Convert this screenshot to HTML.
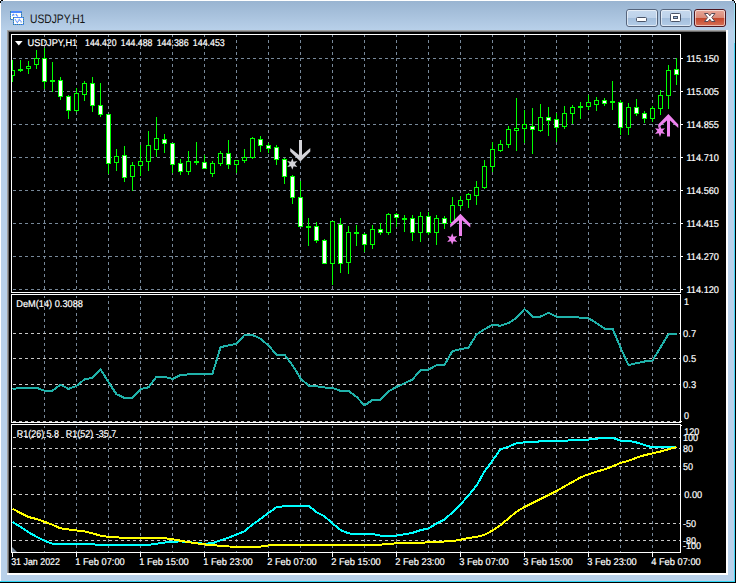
<!DOCTYPE html>
<html><head><meta charset="utf-8"><title>USDJPY,H1</title>
<style>html,body{margin:0;padding:0;background:#fff;overflow:hidden}svg{display:block}text{font-family:"Liberation Sans",sans-serif;text-rendering:geometricPrecision}.t9{font-size:9.8px;fill:#fff;stroke:#fff;stroke-width:0.2px}</style></head><body>
<svg width="738" height="583" viewBox="0 0 738 583">
<defs><linearGradient id="tb" x1="0" y1="0" x2="0" y2="1"><stop offset="0" stop-color="#99b4d1"/><stop offset="1" stop-color="#b9d1ea"/></linearGradient><linearGradient id="btn" x1="0" y1="0" x2="0" y2="1"><stop offset="0" stop-color="#c6d9ee"/><stop offset="0.5" stop-color="#bdd2ea"/><stop offset="0.5" stop-color="#a3bedc"/><stop offset="1" stop-color="#b4cde8"/></linearGradient><linearGradient id="cls" x1="0" y1="0" x2="0" y2="1"><stop offset="0" stop-color="#e9a99b"/><stop offset="0.48" stop-color="#d98a78"/><stop offset="0.5" stop-color="#c3452a"/><stop offset="1" stop-color="#d8745a"/></linearGradient><clipPath id="cm"><rect x="12" y="35" width="668" height="257"/></clipPath><clipPath id="c2"><rect x="12" y="295" width="668" height="127"/></clipPath><clipPath id="c3"><rect x="12" y="425" width="668" height="127"/></clipPath></defs>
<rect width="738" height="583" fill="#fff"/>
<g shape-rendering="crispEdges">
<rect x="1" y="1" width="734" height="581" fill="#b9d1ea"/>
<rect x="735" y="3" width="1" height="580" fill="#000"/>
<rect x="0" y="582" width="736" height="1" fill="#000"/>
<rect x="734" y="3" width="1" height="579" fill="#45d5f5"/>
<rect x="734" y="3" width="1" height="40" fill="#9fe3f8"/>
<rect x="0" y="581" width="735" height="1" fill="#2ed6f4"/>
<rect x="1" y="1" width="733" height="30" fill="url(#tb)"/>
<rect x="1" y="0" width="2" height="1" fill="#000"/><rect x="0" y="1" width="1" height="2" fill="#000"/>
<rect x="732" y="0" width="2" height="1" fill="#000"/><rect x="734" y="1" width="1" height="2" fill="#000"/>
<rect x="7" y="30" width="721" height="545" fill="#fff"/>
<rect x="7" y="30" width="719" height="543" fill="#a0a0a0"/>
<rect x="8" y="31" width="718" height="542" fill="#696969"/>
<rect x="9" y="32" width="717" height="541" fill="#000"/>
</g>
<g shape-rendering="crispEdges">
<rect x="10.5" y="11.5" width="11" height="8" fill="#fffefa" stroke="#3f8a8a"/>
<rect x="10.5" y="11.5" width="11" height="8" fill="none" stroke="#4a86ff" stroke-dasharray="1 1"/>
<rect x="11" y="11" width="10" height="2" fill="#4a86ff"/>
<rect x="13.5" y="17.5" width="10" height="7" fill="#fffefa" stroke="#3f8a8a"/>
<rect x="13.5" y="17.5" width="10" height="7" fill="none" stroke="#4a86ff" stroke-dasharray="1 1"/>
<rect x="14" y="17" width="9" height="1" fill="#4a86ff"/>
</g>
<polyline points="12.3,15.6 13.3,14.3 14.3,15.4" fill="none" stroke="#4a86ff" stroke-width="1.1"/>
<polyline points="15.8,14.2 17,15.6 18,16.4" fill="none" stroke="#4a86ff" stroke-width="1.1"/>
<polyline points="15,19.4 17.3,22.6 19.3,19.4 21.6,22.6" fill="none" stroke="#4a86ff" stroke-width="1.1" stroke-dasharray="1.2 0.5"/>
<text x="30" y="22.7" font-size="12.3" fill="#151515" textLength="55.3" lengthAdjust="spacingAndGlyphs">USDJPY,H1</text>
<rect x="626.5" y="9.5" width="31" height="17" rx="2.5" ry="2.5" fill="url(#btn)" stroke="#56657d"/>
<rect x="627.5" y="10.5" width="29" height="15" rx="1.5" ry="1.5" fill="none" stroke="#fff" stroke-opacity="0.55"/>
<rect x="660.5" y="9.5" width="31" height="17" rx="2.5" ry="2.5" fill="url(#btn)" stroke="#56657d"/>
<rect x="661.5" y="10.5" width="29" height="15" rx="1.5" ry="1.5" fill="none" stroke="#fff" stroke-opacity="0.55"/>
<rect x="694.5" y="9.5" width="31" height="17" rx="2.5" ry="2.5" fill="url(#cls)" stroke="#4d1620"/>
<rect x="695.5" y="10.5" width="29" height="15" rx="1.5" ry="1.5" fill="none" stroke="#fff" stroke-opacity="0.55"/>
<rect x="636.5" y="17.5" width="10" height="4" rx="1" fill="#fff" stroke="#4a5468"/>
<rect x="670.5" y="13.5" width="10" height="8" rx="1" fill="#fff" stroke="#4a5468"/>
<rect x="673.5" y="16.5" width="4" height="2" fill="#9fbbdc" stroke="#4a5468"/>
<path d="M704.5 13.5 L708 13.5 L709.8 15.8 L711.5 13.5 L715 13.5 L711.8 17.5 L715 21.5 L711.5 21.5 L709.8 19.2 L708 21.5 L704.5 21.5 L707.7 17.5 Z" fill="#fff" stroke="#5a4a55" stroke-width="1" stroke-linejoin="round"/>
<g shape-rendering="crispEdges" fill="none">
<path d="M44.5 35V292M76.5 35V292M108.5 35V292M140.5 35V292M172.5 35V292M204.5 35V292M236.5 35V292M268.5 35V292M300.5 35V292M332.5 35V292M364.5 35V292M396.5 35V292M428.5 35V292M460.5 35V292M492.5 35V292M524.5 35V292M556.5 35V292M588.5 35V292M620.5 35V292M652.5 35V292" stroke="#778899" stroke-dasharray="3 3" stroke-dashoffset="1"/>
<path d="M13 58.5H679M13 91.5H679M13 124.5H679M13 157.5H679M13 190.5H679M13 223.5H679M13 256.5H679M13 289.5H679" stroke="#778899" stroke-dasharray="3 3"/>
<path d="M44.5 296V422M76.5 296V422M108.5 296V422M140.5 296V422M172.5 296V422M204.5 296V422M236.5 296V422M268.5 296V422M300.5 296V422M332.5 296V422M364.5 296V422M396.5 296V422M428.5 296V422M460.5 296V422M492.5 296V422M524.5 296V422M556.5 296V422M588.5 296V422M620.5 296V422M652.5 296V422" stroke="#778899" stroke-dasharray="3 3" stroke-dashoffset="1"/>
<path d="M13 333.5H680M13 358.5H680M13 384.5H680M13 421.5H680" stroke="#c8c8c8" stroke-dasharray="3 3"/>
<path d="M44.5 426V552M76.5 426V552M108.5 426V552M140.5 426V552M172.5 426V552M204.5 426V552M236.5 426V552M268.5 426V552M300.5 426V552M332.5 426V552M364.5 426V552M396.5 426V552M428.5 426V552M460.5 426V552M492.5 426V552M524.5 426V552M556.5 426V552M588.5 426V552M620.5 426V552M652.5 426V552" stroke="#778899" stroke-dasharray="3 3" stroke-dashoffset="1"/>
<path d="M13 437.5H680M13 448.5H680M13 466.5H680M13 494.5H680M13 523.5H680M13 540.5H680" stroke="#c8c8c8" stroke-dasharray="3 3"/>
</g>
<g shape-rendering="crispEdges" clip-path="url(#cm)">
<rect x="12" y="60" width="1" height="22" fill="#00ff00"/>
<rect x="10" y="70" width="5" height="6" fill="#00ff00"/>
<rect x="11" y="71" width="3" height="4" fill="#000"/>
<rect x="20" y="60" width="1" height="12" fill="#00ff00"/>
<rect x="18" y="69" width="5" height="2" fill="#00ff00"/>
<rect x="28" y="61" width="1" height="13" fill="#00ff00"/>
<rect x="26" y="66" width="5" height="3" fill="#00ff00"/>
<rect x="27" y="67" width="3" height="1" fill="#000"/>
<rect x="36" y="50" width="1" height="19" fill="#00ff00"/>
<rect x="34" y="58" width="5" height="7" fill="#00ff00"/>
<rect x="35" y="59" width="3" height="5" fill="#000"/>
<rect x="44" y="48" width="1" height="41" fill="#00ff00"/>
<rect x="42" y="58" width="5" height="24" fill="#00ff00"/>
<rect x="43" y="59" width="3" height="22" fill="#fff"/>
<rect x="52" y="62" width="1" height="30" fill="#00ff00"/>
<rect x="50" y="80" width="5" height="2" fill="#00ff00"/>
<rect x="60" y="77" width="1" height="23" fill="#00ff00"/>
<rect x="58" y="80" width="5" height="17" fill="#00ff00"/>
<rect x="59" y="81" width="3" height="15" fill="#fff"/>
<rect x="68" y="95" width="1" height="24" fill="#00ff00"/>
<rect x="66" y="96" width="5" height="15" fill="#00ff00"/>
<rect x="67" y="97" width="3" height="13" fill="#fff"/>
<rect x="76" y="88" width="1" height="24" fill="#00ff00"/>
<rect x="74" y="93" width="5" height="18" fill="#00ff00"/>
<rect x="75" y="94" width="3" height="16" fill="#000"/>
<rect x="84" y="81" width="1" height="20" fill="#00ff00"/>
<rect x="82" y="83" width="5" height="12" fill="#00ff00"/>
<rect x="83" y="84" width="3" height="10" fill="#000"/>
<rect x="92" y="77" width="1" height="35" fill="#00ff00"/>
<rect x="90" y="83" width="5" height="23" fill="#00ff00"/>
<rect x="91" y="84" width="3" height="21" fill="#fff"/>
<rect x="100" y="83" width="1" height="34" fill="#00ff00"/>
<rect x="98" y="105" width="5" height="10" fill="#00ff00"/>
<rect x="99" y="106" width="3" height="8" fill="#fff"/>
<rect x="108" y="114" width="1" height="60" fill="#00ff00"/>
<rect x="106" y="114" width="5" height="50" fill="#00ff00"/>
<rect x="107" y="115" width="3" height="48" fill="#fff"/>
<rect x="116" y="149" width="1" height="22" fill="#00ff00"/>
<rect x="114" y="156" width="5" height="7" fill="#00ff00"/>
<rect x="115" y="157" width="3" height="5" fill="#000"/>
<rect x="124" y="146" width="1" height="36" fill="#00ff00"/>
<rect x="122" y="155" width="5" height="23" fill="#00ff00"/>
<rect x="123" y="156" width="3" height="21" fill="#fff"/>
<rect x="132" y="162" width="1" height="29" fill="#00ff00"/>
<rect x="130" y="165" width="5" height="12" fill="#00ff00"/>
<rect x="131" y="166" width="3" height="10" fill="#000"/>
<rect x="140" y="145" width="1" height="31" fill="#00ff00"/>
<rect x="138" y="161" width="5" height="5" fill="#00ff00"/>
<rect x="139" y="162" width="3" height="3" fill="#000"/>
<rect x="148" y="131" width="1" height="40" fill="#00ff00"/>
<rect x="146" y="145" width="5" height="17" fill="#00ff00"/>
<rect x="147" y="146" width="3" height="15" fill="#000"/>
<rect x="156" y="117" width="1" height="40" fill="#00ff00"/>
<rect x="154" y="138" width="5" height="12" fill="#00ff00"/>
<rect x="155" y="139" width="3" height="10" fill="#000"/>
<rect x="164" y="134" width="1" height="19" fill="#00ff00"/>
<rect x="162" y="139" width="5" height="5" fill="#00ff00"/>
<rect x="163" y="140" width="3" height="3" fill="#fff"/>
<rect x="172" y="143" width="1" height="30" fill="#00ff00"/>
<rect x="170" y="143" width="5" height="22" fill="#00ff00"/>
<rect x="171" y="144" width="3" height="20" fill="#fff"/>
<rect x="180" y="159" width="1" height="16" fill="#00ff00"/>
<rect x="178" y="163" width="5" height="9" fill="#00ff00"/>
<rect x="179" y="164" width="3" height="7" fill="#fff"/>
<rect x="188" y="151" width="1" height="24" fill="#00ff00"/>
<rect x="186" y="161" width="5" height="11" fill="#00ff00"/>
<rect x="187" y="162" width="3" height="9" fill="#000"/>
<rect x="196" y="142" width="1" height="23" fill="#00ff00"/>
<rect x="194" y="161" width="5" height="2" fill="#00ff00"/>
<rect x="204" y="155" width="1" height="14" fill="#00ff00"/>
<rect x="202" y="162" width="5" height="7" fill="#00ff00"/>
<rect x="203" y="163" width="3" height="5" fill="#fff"/>
<rect x="212" y="161" width="1" height="16" fill="#00ff00"/>
<rect x="210" y="163" width="5" height="11" fill="#00ff00"/>
<rect x="211" y="164" width="3" height="9" fill="#000"/>
<rect x="220" y="151" width="1" height="15" fill="#00ff00"/>
<rect x="218" y="153" width="5" height="11" fill="#00ff00"/>
<rect x="219" y="154" width="3" height="9" fill="#000"/>
<rect x="228" y="140" width="1" height="29" fill="#00ff00"/>
<rect x="226" y="153" width="5" height="12" fill="#00ff00"/>
<rect x="227" y="154" width="3" height="10" fill="#fff"/>
<rect x="236" y="160" width="1" height="13" fill="#00ff00"/>
<rect x="234" y="160" width="5" height="5" fill="#00ff00"/>
<rect x="235" y="161" width="3" height="3" fill="#000"/>
<rect x="244" y="149" width="1" height="14" fill="#00ff00"/>
<rect x="242" y="157" width="5" height="4" fill="#00ff00"/>
<rect x="243" y="158" width="3" height="2" fill="#000"/>
<rect x="252" y="137" width="1" height="22" fill="#00ff00"/>
<rect x="250" y="138" width="5" height="20" fill="#00ff00"/>
<rect x="251" y="139" width="3" height="18" fill="#000"/>
<rect x="260" y="136" width="1" height="16" fill="#00ff00"/>
<rect x="258" y="139" width="5" height="7" fill="#00ff00"/>
<rect x="259" y="140" width="3" height="5" fill="#fff"/>
<rect x="268" y="143" width="1" height="10" fill="#00ff00"/>
<rect x="266" y="145" width="5" height="4" fill="#00ff00"/>
<rect x="267" y="146" width="3" height="2" fill="#fff"/>
<rect x="276" y="145" width="1" height="20" fill="#00ff00"/>
<rect x="274" y="147" width="5" height="13" fill="#00ff00"/>
<rect x="275" y="148" width="3" height="11" fill="#fff"/>
<rect x="284" y="158" width="1" height="26" fill="#00ff00"/>
<rect x="282" y="159" width="5" height="18" fill="#00ff00"/>
<rect x="283" y="160" width="3" height="16" fill="#fff"/>
<rect x="292" y="175" width="1" height="29" fill="#00ff00"/>
<rect x="290" y="176" width="5" height="22" fill="#00ff00"/>
<rect x="291" y="177" width="3" height="20" fill="#fff"/>
<rect x="300" y="181" width="1" height="46" fill="#00ff00"/>
<rect x="298" y="197" width="5" height="30" fill="#00ff00"/>
<rect x="299" y="198" width="3" height="28" fill="#fff"/>
<rect x="308" y="218" width="1" height="28" fill="#00ff00"/>
<rect x="306" y="226" width="5" height="2" fill="#00ff00"/>
<rect x="316" y="222" width="1" height="21" fill="#00ff00"/>
<rect x="314" y="226" width="5" height="15" fill="#00ff00"/>
<rect x="315" y="227" width="3" height="13" fill="#fff"/>
<rect x="324" y="239" width="1" height="25" fill="#00ff00"/>
<rect x="322" y="240" width="5" height="24" fill="#00ff00"/>
<rect x="323" y="241" width="3" height="22" fill="#fff"/>
<rect x="332" y="221" width="1" height="64" fill="#00ff00"/>
<rect x="330" y="221" width="5" height="43" fill="#00ff00"/>
<rect x="331" y="222" width="3" height="41" fill="#000"/>
<rect x="340" y="218" width="1" height="55" fill="#00ff00"/>
<rect x="338" y="224" width="5" height="40" fill="#00ff00"/>
<rect x="339" y="225" width="3" height="38" fill="#fff"/>
<rect x="348" y="226" width="1" height="48" fill="#00ff00"/>
<rect x="346" y="232" width="5" height="31" fill="#00ff00"/>
<rect x="347" y="233" width="3" height="29" fill="#000"/>
<rect x="356" y="225" width="1" height="21" fill="#00ff00"/>
<rect x="354" y="232" width="5" height="2" fill="#00ff00"/>
<rect x="364" y="233" width="1" height="19" fill="#00ff00"/>
<rect x="362" y="234" width="5" height="11" fill="#00ff00"/>
<rect x="363" y="235" width="3" height="9" fill="#fff"/>
<rect x="372" y="225" width="1" height="24" fill="#00ff00"/>
<rect x="370" y="229" width="5" height="16" fill="#00ff00"/>
<rect x="371" y="230" width="3" height="14" fill="#000"/>
<rect x="380" y="223" width="1" height="12" fill="#00ff00"/>
<rect x="378" y="229" width="5" height="4" fill="#00ff00"/>
<rect x="379" y="230" width="3" height="2" fill="#fff"/>
<rect x="388" y="213" width="1" height="22" fill="#00ff00"/>
<rect x="386" y="214" width="5" height="19" fill="#00ff00"/>
<rect x="387" y="215" width="3" height="17" fill="#000"/>
<rect x="396" y="213" width="1" height="14" fill="#00ff00"/>
<rect x="394" y="214" width="5" height="4" fill="#00ff00"/>
<rect x="395" y="215" width="3" height="2" fill="#fff"/>
<rect x="404" y="215" width="1" height="17" fill="#00ff00"/>
<rect x="402" y="218" width="5" height="2" fill="#00ff00"/>
<rect x="412" y="215" width="1" height="26" fill="#00ff00"/>
<rect x="410" y="218" width="5" height="15" fill="#00ff00"/>
<rect x="411" y="219" width="3" height="13" fill="#fff"/>
<rect x="420" y="212" width="1" height="30" fill="#00ff00"/>
<rect x="418" y="216" width="5" height="17" fill="#00ff00"/>
<rect x="419" y="217" width="3" height="15" fill="#000"/>
<rect x="428" y="212" width="1" height="23" fill="#00ff00"/>
<rect x="426" y="216" width="5" height="17" fill="#00ff00"/>
<rect x="427" y="217" width="3" height="15" fill="#fff"/>
<rect x="436" y="215" width="1" height="30" fill="#00ff00"/>
<rect x="434" y="218" width="5" height="15" fill="#00ff00"/>
<rect x="435" y="219" width="3" height="13" fill="#000"/>
<rect x="444" y="216" width="1" height="13" fill="#00ff00"/>
<rect x="442" y="218" width="5" height="6" fill="#00ff00"/>
<rect x="443" y="219" width="3" height="4" fill="#fff"/>
<rect x="452" y="197" width="1" height="27" fill="#00ff00"/>
<rect x="450" y="205" width="5" height="18" fill="#00ff00"/>
<rect x="451" y="206" width="3" height="16" fill="#000"/>
<rect x="460" y="196" width="1" height="13" fill="#00ff00"/>
<rect x="458" y="200" width="5" height="6" fill="#00ff00"/>
<rect x="459" y="201" width="3" height="4" fill="#000"/>
<rect x="468" y="193" width="1" height="15" fill="#00ff00"/>
<rect x="466" y="194" width="5" height="6" fill="#00ff00"/>
<rect x="467" y="195" width="3" height="4" fill="#000"/>
<rect x="476" y="181" width="1" height="24" fill="#00ff00"/>
<rect x="474" y="187" width="5" height="9" fill="#00ff00"/>
<rect x="475" y="188" width="3" height="7" fill="#000"/>
<rect x="484" y="160" width="1" height="29" fill="#00ff00"/>
<rect x="482" y="166" width="5" height="22" fill="#00ff00"/>
<rect x="483" y="167" width="3" height="20" fill="#000"/>
<rect x="492" y="142" width="1" height="30" fill="#00ff00"/>
<rect x="490" y="149" width="5" height="18" fill="#00ff00"/>
<rect x="491" y="150" width="3" height="16" fill="#000"/>
<rect x="500" y="140" width="1" height="12" fill="#00ff00"/>
<rect x="498" y="144" width="5" height="7" fill="#00ff00"/>
<rect x="499" y="145" width="3" height="5" fill="#000"/>
<rect x="508" y="126" width="1" height="22" fill="#00ff00"/>
<rect x="506" y="129" width="5" height="16" fill="#00ff00"/>
<rect x="507" y="130" width="3" height="14" fill="#000"/>
<rect x="516" y="98" width="1" height="53" fill="#00ff00"/>
<rect x="514" y="128" width="5" height="3" fill="#00ff00"/>
<rect x="515" y="129" width="3" height="1" fill="#000"/>
<rect x="524" y="110" width="1" height="33" fill="#00ff00"/>
<rect x="522" y="124" width="5" height="5" fill="#00ff00"/>
<rect x="523" y="125" width="3" height="3" fill="#000"/>
<rect x="532" y="108" width="1" height="46" fill="#00ff00"/>
<rect x="530" y="126" width="5" height="4" fill="#00ff00"/>
<rect x="531" y="127" width="3" height="2" fill="#fff"/>
<rect x="540" y="104" width="1" height="28" fill="#00ff00"/>
<rect x="538" y="117" width="5" height="14" fill="#00ff00"/>
<rect x="539" y="118" width="3" height="12" fill="#000"/>
<rect x="548" y="107" width="1" height="29" fill="#00ff00"/>
<rect x="546" y="117" width="5" height="4" fill="#00ff00"/>
<rect x="547" y="118" width="3" height="2" fill="#fff"/>
<rect x="556" y="113" width="1" height="29" fill="#00ff00"/>
<rect x="554" y="119" width="5" height="9" fill="#00ff00"/>
<rect x="555" y="120" width="3" height="7" fill="#fff"/>
<rect x="564" y="106" width="1" height="23" fill="#00ff00"/>
<rect x="562" y="113" width="5" height="14" fill="#00ff00"/>
<rect x="563" y="114" width="3" height="12" fill="#000"/>
<rect x="572" y="105" width="1" height="19" fill="#00ff00"/>
<rect x="570" y="107" width="5" height="7" fill="#00ff00"/>
<rect x="571" y="108" width="3" height="5" fill="#000"/>
<rect x="580" y="102" width="1" height="17" fill="#00ff00"/>
<rect x="578" y="106" width="5" height="2" fill="#00ff00"/>
<rect x="588" y="95" width="1" height="15" fill="#00ff00"/>
<rect x="586" y="102" width="5" height="5" fill="#00ff00"/>
<rect x="587" y="103" width="3" height="3" fill="#000"/>
<rect x="596" y="97" width="1" height="14" fill="#00ff00"/>
<rect x="594" y="100" width="5" height="5" fill="#00ff00"/>
<rect x="595" y="101" width="3" height="3" fill="#000"/>
<rect x="604" y="98" width="1" height="8" fill="#00ff00"/>
<rect x="602" y="100" width="5" height="4" fill="#00ff00"/>
<rect x="603" y="101" width="3" height="2" fill="#fff"/>
<rect x="612" y="81" width="1" height="29" fill="#00ff00"/>
<rect x="610" y="101" width="5" height="2" fill="#00ff00"/>
<rect x="620" y="100" width="1" height="35" fill="#00ff00"/>
<rect x="618" y="102" width="5" height="26" fill="#00ff00"/>
<rect x="619" y="103" width="3" height="24" fill="#fff"/>
<rect x="628" y="103" width="1" height="32" fill="#00ff00"/>
<rect x="626" y="107" width="5" height="21" fill="#00ff00"/>
<rect x="627" y="108" width="3" height="19" fill="#000"/>
<rect x="636" y="99" width="1" height="17" fill="#00ff00"/>
<rect x="634" y="107" width="5" height="7" fill="#00ff00"/>
<rect x="635" y="108" width="3" height="5" fill="#fff"/>
<rect x="644" y="111" width="1" height="12" fill="#00ff00"/>
<rect x="642" y="113" width="5" height="6" fill="#00ff00"/>
<rect x="643" y="114" width="3" height="4" fill="#fff"/>
<rect x="652" y="106" width="1" height="16" fill="#00ff00"/>
<rect x="650" y="108" width="5" height="11" fill="#00ff00"/>
<rect x="651" y="109" width="3" height="9" fill="#000"/>
<rect x="660" y="90" width="1" height="25" fill="#00ff00"/>
<rect x="658" y="95" width="5" height="14" fill="#00ff00"/>
<rect x="659" y="96" width="3" height="12" fill="#000"/>
<rect x="668" y="65" width="1" height="44" fill="#00ff00"/>
<rect x="666" y="70" width="5" height="26" fill="#00ff00"/>
<rect x="667" y="71" width="3" height="24" fill="#000"/>
<rect x="676" y="58" width="1" height="27" fill="#00ff00"/>
<rect x="674" y="69" width="5" height="6" fill="#00ff00"/>
<rect x="675" y="70" width="3" height="4" fill="#fff"/>
</g>
<path d="M299 140 H302 V155 L310.3 148 L310.3 151.4 L300.4 161.6 L290.2 151.4 L290.2 148 L299 155 Z" fill="#d3d3d8"/>
<polygon points="292.30,158.20 293.61,161.74 297.32,161.10 294.91,164.00 297.32,166.90 293.61,166.26 292.30,169.80 291.00,166.26 287.28,166.90 289.69,164.00 287.28,161.10 291.00,161.74" fill="#d3d3d8"/>
<path d="M459 236 H462 V220.3 L470.3 227.60000000000002 L470.3 224.10000000000002 L460.4 213.70000000000002 L450.2 224.10000000000002 L450.2 227.60000000000002 L459 220.3 Z" fill="#ee82ee"/>
<polygon points="452.20,233.20 453.50,236.74 457.22,236.10 454.81,239.00 457.22,241.90 453.50,241.26 452.20,244.80 450.89,241.26 447.18,241.90 449.59,239.00 447.18,236.10 450.89,236.74" fill="#ee82ee"/>
<path d="M667 136.4 H670 V120.6 L678.3 127.89999999999999 L678.3 124.39999999999999 L668.4 114.0 L658.2 124.39999999999999 L658.2 127.89999999999999 L667 120.6 Z" fill="#ee82ee"/>
<polygon points="660.00,125.30 661.30,128.84 665.02,128.20 662.61,131.10 665.02,134.00 661.30,133.36 660.00,136.90 658.70,133.36 654.98,134.00 657.39,131.10 654.98,128.20 658.70,128.84" fill="#ee82ee"/>
<polyline points="12.5,389.1 20.5,387.7 28.5,387.7 36.5,387.7 44.5,390.7 52.5,390.7 60.5,384.7 68.5,388.9 76.5,385.9 84.5,379.4 92.5,377.8 100.5,369.3 108.5,382.2 116.5,394.2 124.5,397.9 132.5,397.9 140.5,389.1 148.5,387.3 156.5,376.7 164.5,376.7 172.5,379.0 180.5,374.9 188.5,374.4 196.5,373.7 204.5,373.7 212.5,373.7 220.5,347.2 228.5,345.4 236.5,343.8 244.5,335.0 252.5,335.0 260.5,338.7 268.5,345.6 276.5,354.6 284.5,354.6 292.5,365.2 300.5,378.3 308.5,385.7 316.5,386.2 324.5,387.5 332.5,388.0 340.5,390.8 348.5,390.8 356.5,396.8 364.5,405.3 372.5,400.0 380.5,399.7 388.5,391.2 396.5,387.1 404.5,383.2 412.5,379.5 420.5,370.0 428.5,369.6 436.5,365.2 444.5,364.7 452.5,351.1 460.5,349.1 468.5,347.7 476.5,334.6 484.5,329.3 492.5,324.6 500.5,325.8 508.5,323.1 516.5,317.7 524.5,309.0 532.5,316.6 540.5,316.6 548.5,312.8 556.5,316.6 564.5,316.6 572.5,316.6 580.5,317.7 588.5,318.2 596.5,323.1 604.5,328.5 612.5,328.5 620.5,347.6 628.5,365.1 636.5,363.2 644.5,361.5 652.5,360.5 660.5,347.5 668.5,333.9 676.5,333.9" fill="none" stroke="#20b2aa" stroke-width="2" stroke-linejoin="round" shape-rendering="crispEdges" clip-path="url(#c2)"/>
<polyline points="12.5,521.8 20.5,526.9 28.5,532.2 36.5,536.8 44.5,540.7 52.5,543.7 60.5,543.7 68.5,543.7 76.5,543.7 84.5,543.7 92.5,544.3 100.5,544.9 108.5,544.9 116.5,544.9 124.5,544.9 132.5,544.9 140.5,544.9 148.5,544.9 156.5,543.7 164.5,542.6 172.5,541.7 180.5,541.4 188.5,542.1 196.5,543.0 204.5,543.7 212.5,543.3 220.5,540.3 228.5,537.7 236.5,534.6 244.5,531.2 252.5,524.5 260.5,519.0 268.5,512.9 276.5,507.2 284.5,506.2 292.5,505.6 300.5,505.6 308.5,505.6 316.5,512.3 324.5,516.3 332.5,523.5 340.5,530.0 348.5,533.4 356.5,533.9 364.5,533.9 372.5,533.9 380.5,535.6 388.5,535.6 396.5,535.6 404.5,534.2 412.5,532.9 420.5,530.2 428.5,528.4 436.5,523.6 444.5,519.5 452.5,512.3 460.5,504.5 468.5,495.4 476.5,485.6 484.5,471.5 492.5,460.5 500.5,449.3 508.5,446.7 516.5,443.2 524.5,442.4 532.5,442.4 540.5,441.2 548.5,440.6 556.5,440.6 564.5,440.6 572.5,440.4 580.5,440.0 588.5,439.6 596.5,438.7 604.5,437.8 612.5,437.8 620.5,440.6 628.5,440.8 636.5,442.5 644.5,445.0 652.5,447.4 660.5,447.4 668.5,447.4 676.5,447.1" fill="none" stroke="#00ffff" stroke-width="2" stroke-linejoin="round" shape-rendering="crispEdges" clip-path="url(#c3)"/>
<polyline points="12.5,508.7 20.5,513.0 28.5,517.0 36.5,519.0 44.5,521.8 52.5,524.8 60.5,528.3 68.5,529.4 76.5,530.4 84.5,531.3 92.5,533.3 100.5,535.7 108.5,536.8 116.5,537.3 124.5,538.0 132.5,538.2 140.5,538.2 148.5,538.2 156.5,538.2 164.5,538.2 172.5,539.3 180.5,540.7 188.5,542.1 196.5,543.3 204.5,544.4 212.5,545.2 220.5,545.8 228.5,546.5 236.5,546.6 244.5,546.6 252.5,546.6 260.5,546.6 268.5,545.4 276.5,544.7 284.5,544.7 292.5,544.7 300.5,544.7 308.5,544.7 316.5,544.7 324.5,544.7 332.5,544.7 340.5,544.7 348.5,544.7 356.5,544.7 364.5,544.7 372.5,544.7 380.5,544.7 388.5,543.8 396.5,543.4 404.5,543.4 412.5,543.2 420.5,542.8 428.5,542.3 436.5,542.1 444.5,541.5 452.5,541.1 460.5,539.7 468.5,538.0 476.5,537.0 484.5,534.9 492.5,530.5 500.5,525.2 508.5,518.4 516.5,511.7 524.5,506.9 532.5,502.9 540.5,498.9 548.5,495.1 556.5,491.1 564.5,486.4 572.5,482.0 580.5,477.4 588.5,474.2 596.5,471.7 604.5,469.3 612.5,466.4 620.5,463.0 628.5,460.8 636.5,457.7 644.5,455.2 652.5,453.4 660.5,451.5 668.5,449.3 676.5,447.1" fill="none" stroke="#ffff00" stroke-width="2" stroke-linejoin="round" shape-rendering="crispEdges" clip-path="url(#c3)"/>
<g shape-rendering="crispEdges" fill="#fff">
<rect x="11" y="34" width="670" height="1"/>
<rect x="11" y="292" width="670" height="1"/>
<rect x="11" y="34" width="1" height="259"/>
<rect x="680" y="34" width="1" height="259"/>
<rect x="11" y="294" width="670" height="1"/>
<rect x="11" y="422" width="670" height="1"/>
<rect x="11" y="294" width="1" height="129"/>
<rect x="680" y="294" width="1" height="129"/>
<rect x="11" y="424" width="670" height="1"/>
<rect x="11" y="552" width="670" height="1"/>
<rect x="11" y="424" width="1" height="129"/>
<rect x="680" y="424" width="1" height="129"/>
<rect x="681" y="58" width="2" height="1"/>
<rect x="681" y="91" width="2" height="1"/>
<rect x="681" y="124" width="2" height="1"/>
<rect x="681" y="157" width="2" height="1"/>
<rect x="681" y="190" width="2" height="1"/>
<rect x="681" y="223" width="2" height="1"/>
<rect x="681" y="256" width="2" height="1"/>
<rect x="681" y="289" width="2" height="1"/>
<rect x="681" y="421" width="1" height="1"/><rect x="681" y="425" width="1" height="1"/>
<rect x="12" y="553" width="1" height="4"/>
<rect x="76" y="553" width="1" height="4"/>
<rect x="140" y="553" width="1" height="4"/>
<rect x="204" y="553" width="1" height="4"/>
<rect x="268" y="553" width="1" height="4"/>
<rect x="332" y="553" width="1" height="4"/>
<rect x="396" y="553" width="1" height="4"/>
<rect x="460" y="553" width="1" height="4"/>
<rect x="524" y="553" width="1" height="4"/>
<rect x="588" y="553" width="1" height="4"/>
<rect x="652" y="553" width="1" height="4"/>
</g>
<polygon points="12,547 12,552 17,552" fill="#778899"/>
<polygon points="15,41 22.6,41 18.8,45.4" fill="#fff"/>
<text class="t9" x="27.6" y="45.7" textLength="49.6" lengthAdjust="spacingAndGlyphs">USDJPY,H1</text>
<text class="t9" x="85.1" y="45.7" textLength="31.4" lengthAdjust="spacingAndGlyphs">144.420</text>
<text class="t9" x="120.8" y="45.7" textLength="31.6" lengthAdjust="spacingAndGlyphs">144.488</text>
<text class="t9" x="156.7" y="45.7" textLength="32" lengthAdjust="spacingAndGlyphs">144.386</text>
<text class="t9" x="192.8" y="45.7" textLength="32" lengthAdjust="spacingAndGlyphs">144.453</text>
<text class="t9" x="686.4" y="62" textLength="32.6" lengthAdjust="spacingAndGlyphs">115.150</text>
<text class="t9" x="686.4" y="95" textLength="32.6" lengthAdjust="spacingAndGlyphs">115.005</text>
<text class="t9" x="686.4" y="128" textLength="32.6" lengthAdjust="spacingAndGlyphs">114.855</text>
<text class="t9" x="686.4" y="161" textLength="32.6" lengthAdjust="spacingAndGlyphs">114.710</text>
<text class="t9" x="686.4" y="194" textLength="32.6" lengthAdjust="spacingAndGlyphs">114.560</text>
<text class="t9" x="686.4" y="227" textLength="32.6" lengthAdjust="spacingAndGlyphs">114.415</text>
<text class="t9" x="686.4" y="260" textLength="32.6" lengthAdjust="spacingAndGlyphs">114.270</text>
<text class="t9" x="686.4" y="293" textLength="32.6" lengthAdjust="spacingAndGlyphs">114.120</text>
<text class="t9" x="16.3" y="306.8" textLength="66.6" lengthAdjust="spacingAndGlyphs">DeM(14) 0.3088</text>
<text class="t9" x="684" y="305.0" textLength="5" lengthAdjust="spacingAndGlyphs">1</text>
<text class="t9" x="683.1" y="337.0" textLength="13" lengthAdjust="spacingAndGlyphs">0.7</text>
<text class="t9" x="683.1" y="362.0" textLength="13" lengthAdjust="spacingAndGlyphs">0.5</text>
<text class="t9" x="683.1" y="387.5" textLength="13" lengthAdjust="spacingAndGlyphs">0.3</text>
<text class="t9" x="684" y="418.9" textLength="5" lengthAdjust="spacingAndGlyphs">0</text>
<text class="t9" x="16.7" y="437" textLength="42.4" lengthAdjust="spacingAndGlyphs">R1(26) 5.8</text>
<text class="t9" x="65.7" y="437" textLength="50.5" lengthAdjust="spacingAndGlyphs">R1(52) -35.7</text>
<text class="t9" x="684.2" y="435.0" textLength="15" lengthAdjust="spacingAndGlyphs">120</text>
<text class="t9" x="683" y="440.7" textLength="15" lengthAdjust="spacingAndGlyphs">100</text>
<text class="t9" x="683" y="451.59999999999997" textLength="10" lengthAdjust="spacingAndGlyphs">80</text>
<text class="t9" x="683" y="469.59999999999997" textLength="10" lengthAdjust="spacingAndGlyphs">50</text>
<text class="t9" x="684.2" y="498.2" textLength="18" lengthAdjust="spacingAndGlyphs">0.00</text>
<text class="t9" x="683" y="526.7" textLength="13" lengthAdjust="spacingAndGlyphs">-50</text>
<text class="t9" x="683" y="544.2" textLength="13" lengthAdjust="spacingAndGlyphs">-80</text>
<text class="t9" x="683" y="548.5" textLength="18" lengthAdjust="spacingAndGlyphs">-100</text>
<text class="t9" x="11.2" y="564.7" textLength="48.8" lengthAdjust="spacingAndGlyphs">31 Jan 2022</text>
<text class="t9" x="75.2" y="564.7" textLength="49.6" lengthAdjust="spacingAndGlyphs">1 Feb 07:00</text>
<text class="t9" x="139.2" y="564.7" textLength="49.6" lengthAdjust="spacingAndGlyphs">1 Feb 15:00</text>
<text class="t9" x="203.2" y="564.7" textLength="49.6" lengthAdjust="spacingAndGlyphs">1 Feb 23:00</text>
<text class="t9" x="267.2" y="564.7" textLength="49.6" lengthAdjust="spacingAndGlyphs">2 Feb 07:00</text>
<text class="t9" x="331.2" y="564.7" textLength="49.6" lengthAdjust="spacingAndGlyphs">2 Feb 15:00</text>
<text class="t9" x="395.2" y="564.7" textLength="49.6" lengthAdjust="spacingAndGlyphs">2 Feb 23:00</text>
<text class="t9" x="459.2" y="564.7" textLength="49.6" lengthAdjust="spacingAndGlyphs">3 Feb 07:00</text>
<text class="t9" x="523.2" y="564.7" textLength="49.6" lengthAdjust="spacingAndGlyphs">3 Feb 15:00</text>
<text class="t9" x="587.2" y="564.7" textLength="49.6" lengthAdjust="spacingAndGlyphs">3 Feb 23:00</text>
<text class="t9" x="651.2" y="564.7" textLength="49.6" lengthAdjust="spacingAndGlyphs">4 Feb 07:00</text>
</svg></body></html>
